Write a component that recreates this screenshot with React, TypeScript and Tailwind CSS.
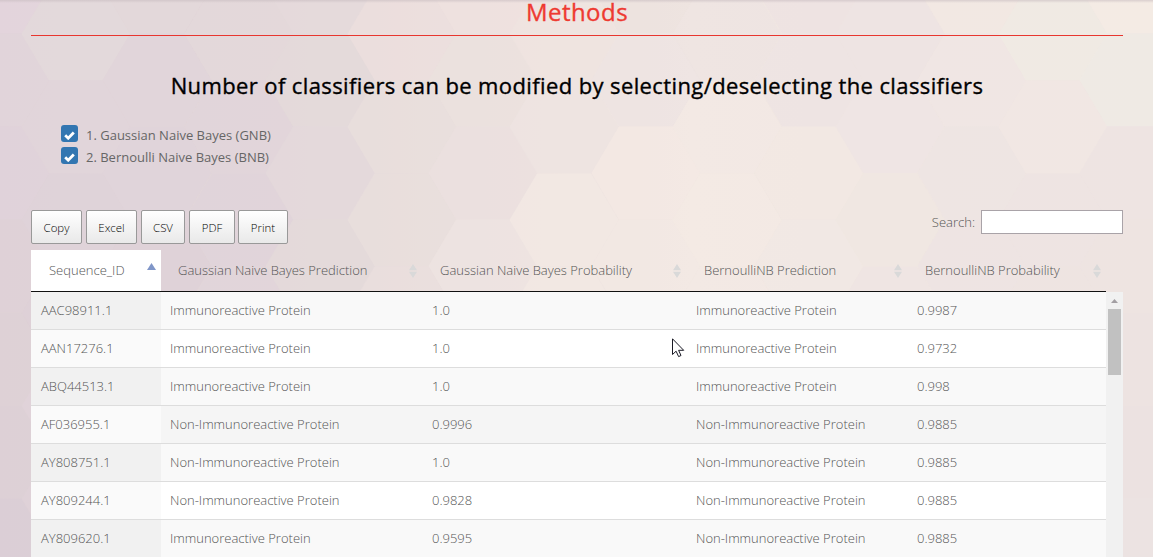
import React from "react";

const hexColumns: { x: number; y: number; fills: string[] }[] = [
  { x: -5, y: -13, fills: ["#e4d5dc", "#e1d4da", "#e0d2d9", "#dfd1d6", "#ddd1d4", "#dccfd5", "#dacdd4"] },
  { x: 76, y: 34, fills: ["#e4d9db", "#e1d5da", "#dfd2d8", "#ddd0d6", "#e0d2d8", "#dfd1d7", "#dccfd6"] },
  { x: 157, y: -13, fills: ["#e3d8da", "#e1d5da", "#e0d3d9", "#dfd1d7"] },
  { x: 239, y: 34, fills: ["#e3d8da", "#e1d5da", "#e0d3da", "#e1d5d9"] },
  { x: 320, y: -13, fills: ["#e5dadb", "#e4d9da", "#e3d8db", "#e4d9da"] },
  { x: 402, y: 34, fills: ["#ecdfdd", "#e8dedc", "#e9dedc", "#eadfdd"] },
  { x: 483, y: -13, fills: ["#efe1de", "#ebe1dd", "#ebe0df", "#eee3e1"] },
  { x: 564, y: 34, fills: ["#efe3e0", "#eee3e1", "#f3e8e3", "#f3e8e3"] },
  { x: 646, y: -13, fills: ["#ece2df", "#eee4e2", "#f4e9e4", "#f3e9e3"] },
  { x: 727, y: 34, fills: ["#eee3e1", "#f2e9e3", "#f4eae4", "#f3e9e4"] },
  { x: 809, y: -13, fills: ["#ede2e1", "#eee4e2", "#f2e9e2", "#f1e8e3"] },
  { x: 890, y: 34, fills: ["#eee4e2", "#efe5e3", "#f0e7e1", "#efe5e2"] },
  { x: 972, y: -13, fills: ["#f2e8e2", "#f0e6e3", "#eee5e2", "#eee4e2"] },
  { x: 1053, y: 34, fills: ["#f0ebe4", "#f1e7e4", "#eee4e2", "#ede3e1"] },
  { x: 1134, y: -13, fills: ["#f5ece5", "#efebe5", "#eee4e2", "#ede3e1", "#ece2e1", "#ebe1e1", "#ebe2e2"] },
];

function Backdrop() {
  return (
    <svg className="absolute inset-0 -z-10" width="1153" height="557" aria-hidden="true">
      <defs>
        <linearGradient id="base" x1="0" y1="0" x2="1" y2="0">
          <stop offset="0" stopColor="#e0d3d9" />
          <stop offset="0.25" stopColor="#e3d8da" />
          <stop offset="0.42" stopColor="#ece1df" />
          <stop offset="0.6" stopColor="#f2e8e3" />
          <stop offset="0.8" stopColor="#f0e6e3" />
          <stop offset="1" stopColor="#eee4e2" />
        </linearGradient>
        <linearGradient id="top" x1="0" y1="0" x2="0" y2="1">
          <stop offset="0" stopColor="#c8bcc0" stopOpacity="0.6" />
          <stop offset="1" stopColor="#c8bcc0" stopOpacity="0" />
        </linearGradient>
      </defs>
      <rect width="1153" height="557" fill="url(#base)" />
      {hexColumns.map((c) =>
        c.fills.map((f, i) => {
          const y = c.y + i * 93;
          return (
            <polygon
              key={c.x + "-" + i}
              fill={f}
              fillOpacity="0.8"
              points={`${c.x - 54.5},${y} ${c.x - 27},${y - 46.5} ${c.x + 27},${y - 46.5} ${c.x + 54.5},${y} ${c.x + 27},${y + 46.5} ${c.x - 27},${y + 46.5}`}
            />
          );
        })
      )}
      <rect width="1153" height="3" fill="url(#top)" />
    </svg>
  );
}

const rows = [
  ["AAC98911.1", "Immunoreactive Protein", "1.0", "Immunoreactive Protein", "0.9987"],
  ["AAN17276.1", "Immunoreactive Protein", "1.0", "Immunoreactive Protein", "0.9732"],
  ["ABQ44513.1", "Immunoreactive Protein", "1.0", "Immunoreactive Protein", "0.998"],
  ["AF036955.1", "Non-Immunoreactive Protein", "0.9996", "Non-Immunoreactive Protein", "0.9885"],
  ["AY808751.1", "Non-Immunoreactive Protein", "1.0", "Non-Immunoreactive Protein", "0.9885"],
  ["AY809244.1", "Non-Immunoreactive Protein", "0.9828", "Non-Immunoreactive Protein", "0.9885"],
  ["AY809620.1", "Immunoreactive Protein", "0.9595", "Non-Immunoreactive Protein", "0.9885"],
];

const headers = [
  "Gaussian Naive Bayes Prediction",
  "Gaussian Naive Bayes Probability",
  "BernoulliNB Prediction",
  "BernoulliNB Probability",
];

function SortBoth() {
  return (
    <svg width="8" height="14" viewBox="0 0 8 14" fill="#d9d9d9" className="shrink-0">
      <path d="M4 0L8 6.3H0zM0 7.7H8L4 14z" />
    </svg>
  );
}

function Check({ label }: { label: string }) {
  return (
    <label className="flex h-[22px] items-start">
      <span className="flex h-[17px] w-[17px] items-center justify-center rounded-[3px] bg-[#3276b1]">
        <svg width="11" height="9" viewBox="0 0 11 9" fill="none" stroke="#fff" strokeWidth="2.8" className="mt-[4px]">
          <path d="M1.2 4.3L4.2 7.2L9.8 1.5" />
        </svg>
      </span>
      <span className="ml-2 text-[13px] leading-5 text-[#666]">{label}</span>
    </label>
  );
}

const buttons = [
  { label: "Copy", width: "w-[51px]" },
  { label: "Excel", width: "w-[51px]" },
  { label: "CSV", width: "w-[44px]" },
  { label: "PDF", width: "w-[46px]" },
  { label: "Print", width: "-ml-px w-[50px]" },
];

const gridCols = "grid grid-cols-[130px_261px_264px_221px_199px]";

export default function App() {
  return (
    <div className="relative isolate flex h-[557px] w-[1153px] flex-col overflow-hidden pl-[31px] pr-[30px] font-['Open_Sans',sans-serif] text-[13px] text-[#555]">
      <Backdrop />
      <h2 className="h-[36px] shrink-0 border-b border-[#e8362f] text-center text-[24px] font-medium leading-[23px] tracking-[0.45px] text-[#ee3a31] [-webkit-text-stroke:0.35px]">
        Methods
      </h2>
      <h3 className="mt-[33px] h-8 shrink-0 text-center text-[22px] font-medium leading-8 tracking-[0.39px] text-black [-webkit-text-stroke:0.35px]">
        Number of classifiers can be modified by selecting/deselecting the classifiers
      </h3>
      <div className="mt-[24px] flex h-[44px] shrink-0 flex-col pl-[30px]">
        <Check label="1. Gaussian Naive Bayes (GNB)" />
        <Check label="2. Bernoulli Naive Bayes (BNB)" />
      </div>
      <div className="mt-[41px] flex h-[34px] shrink-0 items-start justify-between">
        <div className="flex gap-1">
          {buttons.map((b) => (
            <button
              key={b.label}
              className={`${b.width} h-[34px] rounded-[2px] border border-[#999] bg-gradient-to-b from-white to-[#e9e9e9] pt-[2px] text-[11.44px] font-light text-black`}
            >
              {b.label}
            </button>
          ))}
        </div>
        <label className="flex items-center font-light leading-6">
          Search:
          <input className="ml-[6px] h-6 w-[142px] border border-[#a9a3a8] bg-white" />
        </label>
      </div>
      <div className={`${gridCols} mt-[6px] h-[42px] w-[1075px] shrink-0 border-b border-[#111] font-light`}>
        <div className="flex justify-between bg-white pl-[18px] pr-[5px]">
          <span className="leading-[41px]">Sequence_ID</span>
          <svg width="9" height="7" viewBox="0 0 9 7" fill="#8096c8" className="mt-[13px]">
            <path d="M4.5 0L9 7H0z" />
          </svg>
        </div>
        {headers.map((h, i) => (
          <div key={h} className={`flex items-center justify-between pr-[5px] ${i === 0 ? "pl-[17px]" : "pl-[18px]"}`}>
            <span>{h}</span>
            <SortBoth />
          </div>
        ))}
      </div>
      <div className="flex h-[265px] shrink-0 overflow-hidden">
        <div className="w-[1075px] shrink-0">
          {rows.map((r, i) => (
            <div
              key={r[0]}
              className={`${gridCols} h-[38px] border-b border-[#ddd] font-light leading-[37px] ${i === 3 ? "bg-[#f5f5f5]" : i % 2 ? "bg-white" : "bg-[#f9f9f9]"}`}
            >
              {r.map((v, j) => (
                <div
                  key={j}
                  className={`${j === 1 ? "pl-[9px]" : "pl-[10px]"} ${j === 0 ? (i % 2 ? "bg-[#fafafa]" : "bg-[#f1f1f1]") : ""}`}
                >
                  {v}
                </div>
              ))}
            </div>
          ))}
        </div>
        <div className="flex w-[17px] shrink-0 flex-col items-center bg-[#f1f1f1]">
          <svg width="7" height="4" viewBox="0 0 7 4" fill="#a39fa3" className="mt-[7px] shrink-0">
            <path d="M3.5 0L7 4H0z" />
          </svg>
          <div className="mt-[6px] h-[66px] w-[13px] shrink-0 bg-[#c1c1c1]" />
        </div>
      </div>
      <svg className="absolute left-[672px] top-[338px]" width="13" height="20" viewBox="0 0 13 20" fill="#fff" stroke="#1a1a25" strokeWidth="1">
        <path d="M.5.8V16.5L4.1 13.2L6.6 18.6L9 17.5L6.6 12.3H11.7z" />
      </svg>
    </div>
  );
}
